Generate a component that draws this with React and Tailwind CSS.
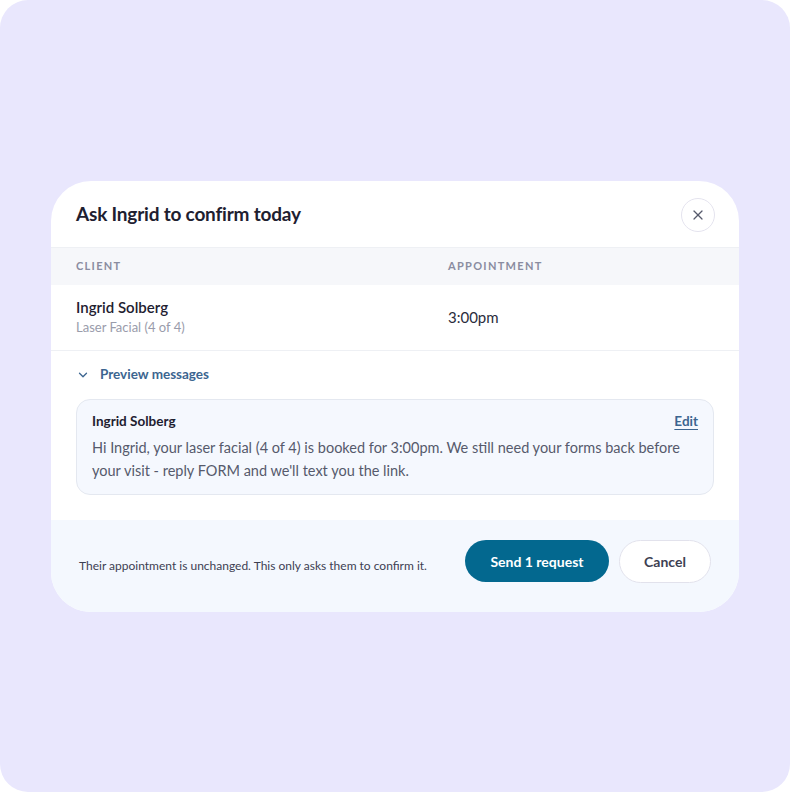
import { X, ChevronDown } from "lucide-react";

export default function App() {
  return (
    <div
      className="w-[790px] h-[792px] rounded-[28px] bg-[#e9e7fd] flex items-center justify-center"
      style={{ fontFamily: "Lato, 'Noto Sans', sans-serif" }}
    >
      <div className="w-[688px] bg-white rounded-[40px] overflow-hidden">
        {/* Header */}
        <div className="h-[67px] flex items-center justify-between pl-[25px] pr-[24px] pt-[2px] border-b border-[#eef0f4]">
          <h2 className="text-[19px] font-bold text-[#1e2030] tracking-[-0.2px]">
            Ask Ingrid to confirm today
          </h2>
          <button className="w-[34px] h-[34px] rounded-full border border-[#e4e3ee] flex items-center justify-center text-[#565a6c]">
            <X size={16} strokeWidth={1.8} />
          </button>
        </div>

        {/* Table header */}
        <div className="h-[37px] bg-[#f6f7fa] grid grid-cols-[372px_1fr] items-center px-[25px] text-[11px] font-bold tracking-[1.3px] text-[#8a8ca0]">
          <span>CLIENT</span>
          <span>APPOINTMENT</span>
        </div>

        {/* Row */}
        <div className="h-[66px] grid grid-cols-[372px_1fr] items-center px-[25px] border-b border-[#eef0f4]">
          <div className="flex flex-col">
            <span className="text-[15px] font-semibold text-[#1e2030] leading-[20px]">
              Ingrid Solberg
            </span>
            <span className="text-[13px] text-[#9a9cab] leading-[20px]">
              Laser Facial (4 of 4)
            </span>
          </div>
          <span className="text-[15px] text-[#2a2c3c]">3:00pm</span>
        </div>

        {/* Preview */}
        <div className="px-[25px] pt-[14px] pb-[25px]">
          <button className="flex items-center gap-[10px] text-[13.5px] font-bold text-[#3c6590] h-[20px]">
            <ChevronDown size={14} strokeWidth={2.2} />
            Preview messages
          </button>
          <div className="mt-[14px] rounded-[14px] border border-[#e4e8f0] bg-[#f5f8fe] px-[15px] pt-[12px] pb-[12px]">
            <div className="flex items-center justify-between h-[20px]">
              <span className="text-[13.5px] font-bold text-[#1e2030]">Ingrid Solberg</span>
              <span className="text-[13.5px] font-bold text-[#3c6590] underline underline-offset-[3px]">
                Edit
              </span>
            </div>
            <p className="mt-[4px] text-[14.5px] leading-[23px] text-[#565a6c]">
              Hi Ingrid, your laser facial (4 of 4) is booked for 3:00pm. We still need your forms back before your visit - reply FORM and we'll text you the link.
            </p>
          </div>
        </div>

        {/* Footer */}
        <div className="bg-[#f4f8fe] h-[92px] flex items-start justify-between pl-[28px] pr-[28px] pt-[20px]">
          <span className="mt-[18px] text-[12px] leading-[16px] text-[#3d4052]">
            Their appointment is unchanged. This only asks them to confirm it.
          </span>
          <div className="flex items-center gap-[10px]">
            <button className="h-[42px] w-[144px] rounded-full bg-[#03688f] text-white text-[14px] font-bold">
              Send 1 request
            </button>
            <button className="h-[43px] w-[92px] rounded-full bg-white border border-[#e2e2ec] text-[#3d4052] text-[14px] font-bold">
              Cancel
            </button>
          </div>
        </div>
      </div>
    </div>
  );
}
